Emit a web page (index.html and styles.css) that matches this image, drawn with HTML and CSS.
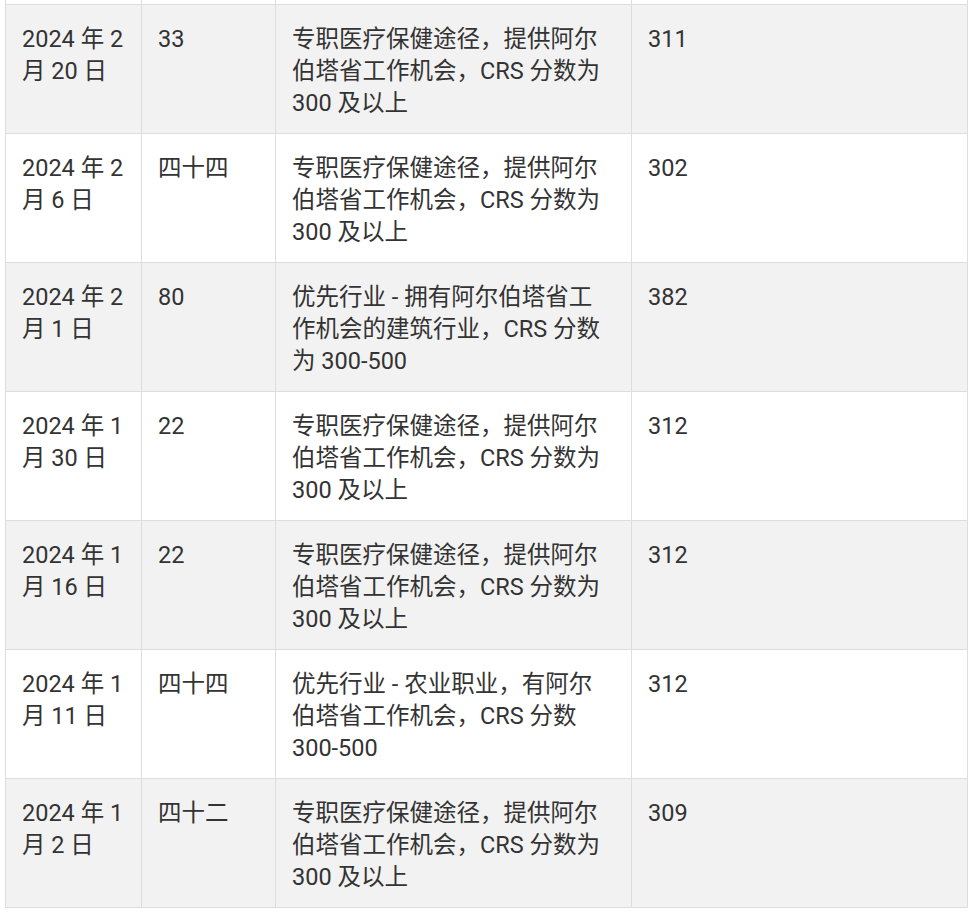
FILE: index.html
```html
<!DOCTYPE html>
<html lang="zh-CN">
<head>
<meta charset="utf-8">
<title>Alberta draws</title>
<link rel="stylesheet" href="styles.css">
</head>
<body>
<table class="draws">
  <colgroup>
    <col class="c-date">
    <col class="c-num">
    <col class="c-stream">
    <col class="c-score">
  </colgroup>
  <tbody>
    <tr class="stub"><td></td><td></td><td></td><td></td></tr>
    <tr class="odd">
      <td>2024 年 2 月 20 日</td>
      <td>33</td>
      <td>专职医疗保健途径，提供阿尔伯塔省工作机会，CRS 分数为 300 及以上</td>
      <td>311</td>
    </tr>
    <tr>
      <td>2024 年 2 月 6 日</td>
      <td>四十四</td>
      <td>专职医疗保健途径，提供阿尔伯塔省工作机会，CRS 分数为 300 及以上</td>
      <td>302</td>
    </tr>
    <tr class="odd">
      <td>2024 年 2 月 1 日</td>
      <td>80</td>
      <td>优先行业 - 拥有阿尔伯塔省工作机会的建筑行业，CRS 分数为 300-500</td>
      <td>382</td>
    </tr>
    <tr>
      <td>2024 年 1 月 30 日</td>
      <td>22</td>
      <td>专职医疗保健途径，提供阿尔伯塔省工作机会，CRS 分数为 300 及以上</td>
      <td>312</td>
    </tr>
    <tr class="odd">
      <td>2024 年 1 月 16 日</td>
      <td>22</td>
      <td>专职医疗保健途径，提供阿尔伯塔省工作机会，CRS 分数为 300 及以上</td>
      <td>312</td>
    </tr>
    <tr>
      <td>2024 年 1 月 11 日</td>
      <td>四十四</td>
      <td>优先行业 - 农业职业，有阿尔伯塔省工作机会，CRS 分数 300-500</td>
      <td>312</td>
    </tr>
    <tr class="odd">
      <td>2024 年 1 月 2 日</td>
      <td>四十二</td>
      <td>专职医疗保健途径，提供阿尔伯塔省工作机会，CRS 分数为 300 及以上</td>
      <td>309</td>
    </tr>
  </tbody>
</table>
</body>
</html>
```
FILE: styles.css
```css
html, body {
  margin: 0;
  padding: 0;
  background: #ffffff;
}

body {
  font-family: Roboto, "Noto Sans CJK SC", sans-serif;
  color: #333333;
}

.draws {
  margin-left: 5px;
  width: 962px;
  border-collapse: collapse;
  table-layout: fixed;
}

.c-date { width: 136px; }
.c-num { width: 134px; }
.c-stream { width: 356px; }
.c-score { width: 336px; }

.draws td {
  border: 1px solid #dddddd;
  padding: 18px 16px 14px;
  vertical-align: top;
  font-size: 23.5px;
  line-height: 32px;
  height: 96px;
}

.draws tr.odd td {
  background: #f2f2f2;
}

.draws tr.stub td {
  border-top: none;
  padding: 0;
  height: 4px;
  line-height: 0;
  font-size: 0;
}
```
